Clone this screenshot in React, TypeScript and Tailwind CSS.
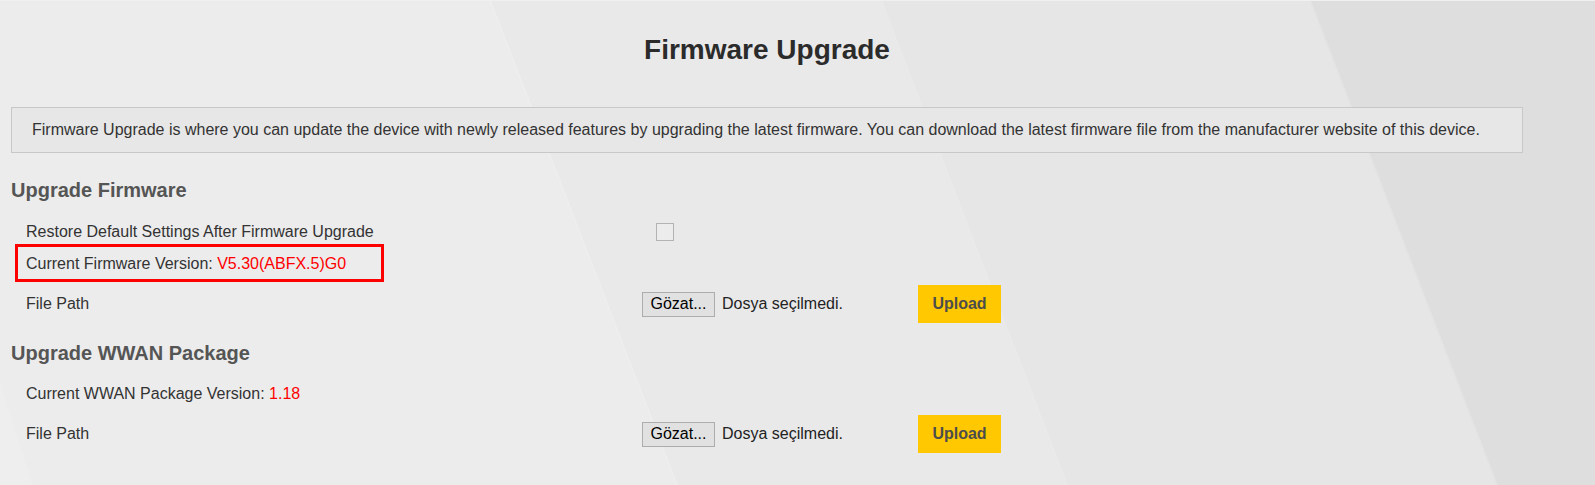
import { FC } from 'react'

// soft diagonal panels behind the settings page
const Backdrop: FC = () => (
  <svg
    className="absolute inset-0 h-full w-full"
    viewBox="0 0 1595 485"
    preserveAspectRatio="none"
    aria-hidden="true"
  >
    <rect x="0" y="0" width="1595" height="485" fill="#ececec" />
    <polygon points="0,383 33,485 0,485" fill="#eeeeee" />
    <polygon points="490,0 1595,0 1595,485 677,485" fill="#e9e9e9" />
    <polygon points="881,0 1595,0 1595,485 1067,485" fill="#e6e6e6" />
    <polygon points="1310,0 1595,0 1595,485 1497,485" fill="#dedede" />
    <line x1="490" y1="0" x2="677" y2="485" stroke="#eeeeee" strokeWidth="1.5" />
    <line x1="881" y1="0" x2="1067" y2="485" stroke="#eaeaea" strokeWidth="1.5" />
    <line x1="1310" y1="0" x2="1497" y2="485" stroke="#e4e4e4" strokeWidth="1.5" />
    <line x1="0" y1="0.5" x2="1595" y2="0.5" stroke="#f0f0f0" strokeWidth="1" />
  </svg>
)

const FileField: FC = () => (
  <div className="flex items-center">
    <div className="flex w-[276px] items-center">
      <button className="h-[25px] w-[73px] border border-[#adadad] bg-[#e1e1e1] text-[16px] leading-none text-black">
        Gözat...
      </button>
      <span className="ml-[7px] text-[16px] text-[#222]">Dosya seçilmedi.</span>
    </div>
    <button className="h-[38px] w-[83px] bg-[#ffc800] text-[16px] font-bold text-[#4d4d4d]">
      Upload
    </button>
  </div>
)

interface RowProps {
  label: React.ReactNode
  children?: React.ReactNode
  tall?: boolean
}

const Row: FC<RowProps> = ({ label, children, tall }) => (
  <div className={tall ? 'flex h-[38px] items-center' : 'flex h-8 items-center'}>
    <div className="w-[631px] pl-[15px] leading-8 text-[16px] text-[#333]">{label}</div>
    <div>{children}</div>
  </div>
)

const App: FC = () => {
  return (
    <div className="relative h-[485px] w-full overflow-hidden font-['Liberation_Sans',Arial,sans-serif]">
      <Backdrop />
      <div className="relative ml-[11px] w-[1512px]">
        <h1 className="pt-[34px] text-center text-[28px] font-bold leading-8 text-[#2b2b2b]">
          Firmware Upgrade
        </h1>

        <div className="mt-[41px] flex h-[46px] items-center border border-[#c8c8c8] bg-[#e7e7e7] pl-5 text-[16px] text-[#333]">
          Firmware Upgrade is where you can update the device with newly released features by upgrading the latest firmware. You can download the latest firmware file from the manufacturer website of this device.
        </div>

        <h2 className="mt-[25px] text-[20px] font-bold leading-6 text-[#555]">Upgrade Firmware</h2>
        <div className="mt-[14px]">
          <Row label="Restore Default Settings After Firmware Upgrade">
            <div className="ml-[14px] h-[18px] w-[18px] border border-[#b3b3b3] bg-[#ececec]" />
          </Row>
          <div className="relative">
            <Row
              label={
                <>
                  Current Firmware Version: <span className="text-[#ff0000]">V5.30(ABFX.5)G0</span>
                </>
              }
            />
            <div className="pointer-events-none absolute left-[4px] top-[-4px] h-[38px] w-[369px] border-[3px] border-[#ff0000]" />
          </div>
          <div className="mt-[5px]">
            <Row label="File Path" tall>
              <FileField />
            </Row>
          </div>
        </div>

        <h2 className="mt-[18px] text-[20px] font-bold leading-6 text-[#555]">Upgrade WWAN Package</h2>
        <div className="mt-[13px]">
          <Row
            label={
              <>
                Current WWAN Package Version: <span className="text-[#ff0000]">1.18</span>
              </>
            }
          />
          <div className="mt-[5px]">
            <Row label="File Path" tall>
              <FileField />
            </Row>
          </div>
        </div>
      </div>
    </div>
  )
}

export default App
